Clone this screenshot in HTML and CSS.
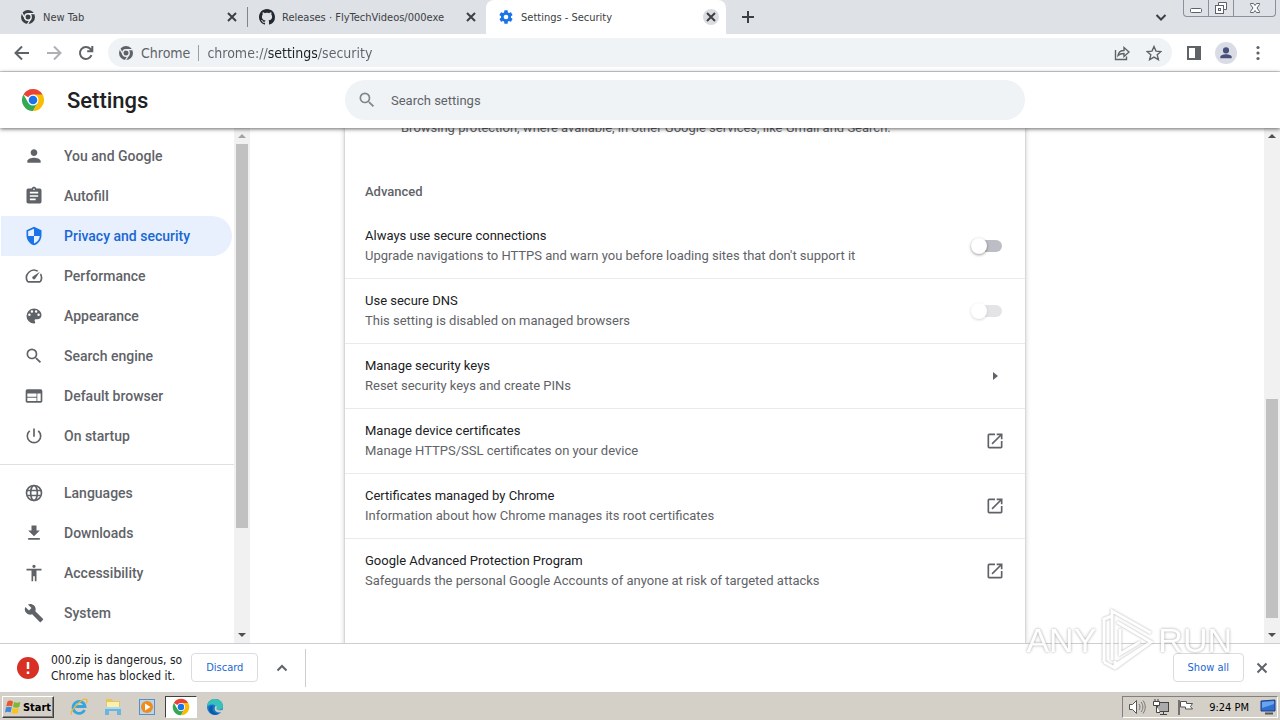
FILE: index.html
```html
<!DOCTYPE html>
<html lang="en">
<head>
  <meta charset="utf-8">
  <meta name="viewport" content="width=device-width, initial-scale=1">
  <title>Settings - Security</title>
  <link rel="stylesheet" href="styles.css">
</head>
<body>
  <svg class="sprite" aria-hidden="true">
    <symbol id="close" viewBox="0 0 16 16"><path d="M4 4l8 8M12 4l-8 8" fill="none" stroke="currentColor" stroke-width="2"/></symbol>
    <symbol id="chrome-mono" viewBox="0 0 16 16">
      <circle cx="8" cy="8" r="7" fill="currentColor"/>
      <circle cx="8" cy="8" r="3.2" fill="currentColor" stroke="#eef1f5" stroke-width="1.4"/>
      <path d="M8 4.7h6.6M5.2 9.6L1.9 3.9M10.8 9.6l-3.3 5.6" stroke="#eef1f5" stroke-width="1.2"/>
    </symbol>
    <symbol id="chrome-color" viewBox="0 0 24 24">
      <path d="M12 12L2.47 6.5A11 11 0 0 1 21.53 6.5z" fill="#ea4335"/>
      <path d="M2.47 6.5A11 11 0 0 0 12 23l4.76-8.25L12 12 7.24 14.75z" fill="#34a853"/>
      <path d="M21.53 6.5A11 11 0 0 1 12 23l4.76-8.25L12 6.5z" fill="#fbbc04"/>
      <circle cx="12" cy="12" r="5.5" fill="#fff"/>
      <circle cx="12" cy="12" r="4.3" fill="#1a73e8"/>
    </symbol>
    <symbol id="search" viewBox="0 0 24 24"><path d="M15.5 14h-.79l-.28-.27A6.47 6.47 0 0 0 16 9.5 6.5 6.5 0 1 0 9.5 16c1.61 0 3.09-.59 4.23-1.57l.27.28v.79l5 4.99L20.49 19l-4.99-5zm-6 0C7.01 14 5 11.99 5 9.5S7.01 5 9.5 5 14 7.01 14 9.5 11.99 14 9.5 14z"/></symbol>
    <symbol id="launch" viewBox="0 0 24 24"><path d="M19 19H5V5h7V3H5a2 2 0 0 0-2 2v14a2 2 0 0 0 2 2h14c1.1 0 2-.9 2-2v-7h-2v7zM14 3v2h3.59l-9.83 9.83 1.41 1.41L19 6.41V10h2V3h-7z"/></symbol>
  </svg>

  <div class="tab-strip">
    <div class="tab">
      <svg class="favicon"><use href="#chrome-mono"/></svg>
      <button class="tab-title">New Tab</button>
      <button class="tab-close" aria-label="Close New Tab"><svg><use href="#close"/></svg></button>
    </div>
    <div class="tab divided">
      <svg class="favicon" viewBox="0 0 16 16"><path fill="#24292f" d="M8 0C3.58 0 0 3.58 0 8c0 3.54 2.29 6.53 5.47 7.59.4.07.55-.17.55-.38 0-.19-.01-.82-.01-1.49-2.01.37-2.53-.49-2.69-.94-.09-.23-.48-.94-.82-1.13-.28-.15-.68-.52-.01-.53.63-.01 1.08.58 1.23.82.72 1.21 1.87.87 2.33.66.07-.52.28-.87.51-1.07-1.78-.2-3.64-.89-3.64-3.95 0-.87.31-1.59.82-2.15-.08-.2-.36-1.02.08-2.12 0 0 .67-.21 2.2.82.64-.18 1.32-.27 2-.27s1.36.09 2 .27c1.53-1.04 2.2-.82 2.2-.82.44 1.1.16 1.92.08 2.12.51.56.82 1.27.82 2.15 0 3.07-1.87 3.75-3.65 3.95.29.25.54.73.54 1.48 0 1.07-.01 1.93-.01 2.2 0 .21.15.46.55.38A8.01 8.01 0 0 0 16 8c0-4.42-3.58-8-8-8z"/></svg>
      <button class="tab-title">Releases · FlyTechVideos/000exe</button>
      <button class="tab-close" aria-label="Close Releases"><svg><use href="#close"/></svg></button>
    </div>
    <div class="tab active">
      <svg class="favicon gear" viewBox="0 0 24 24"><path d="M19.43 12.98c.04-.32.07-.64.07-.98s-.03-.66-.07-.98l2.11-1.65a.5.5 0 0 0 .12-.64l-2-3.46a.5.5 0 0 0-.61-.22l-2.49 1a7.3 7.3 0 0 0-1.69-.98l-.38-2.65A.49.49 0 0 0 14 2h-4a.49.49 0 0 0-.49.42l-.38 2.65c-.61.25-1.17.59-1.69.98l-2.49-1a.5.5 0 0 0-.61.22l-2 3.46a.49.49 0 0 0 .12.64l2.11 1.65a8 8 0 0 0 0 1.96l-2.11 1.65a.5.5 0 0 0-.12.64l2 3.46c.12.22.39.3.61.22l2.49-1c.52.4 1.08.73 1.69.98l.38 2.65c.03.24.24.42.49.42h4c.25 0 .46-.18.49-.42l.38-2.65a7.3 7.3 0 0 0 1.69-.98l2.49 1c.23.09.49 0 .61-.22l2-3.46a.5.5 0 0 0-.12-.64l-2.11-1.65zM12 15.5a3.5 3.5 0 1 1 0-7 3.5 3.5 0 0 1 0 7z"/></svg>
      <button class="tab-title">Settings - Security</button>
      <button class="tab-close" aria-label="Close Settings"><svg><use href="#close"/></svg></button>
    </div>
    <button class="new-tab" aria-label="New tab"><svg viewBox="0 0 16 16"><path d="M8 2v12M2 8h12"/></svg></button>
    <button class="tab-search" aria-label="Search tabs"><svg viewBox="0 0 16 16"><path d="M3.500 6L8 10.500 12.500 6"/></svg></button>
    <div class="window-controls">
      <button aria-label="Minimize"><svg viewBox="0 0 16 16"><rect x="2.500" y="8.500" width="11" height="4" rx="1"/></svg></button>
      <button aria-label="Restore"><svg viewBox="0 0 16 16"><path d="M5.500 5.500v-3h8v7h-3"/><rect x="2.500" y="5.500" width="8" height="8"/><rect x="5.500" y="8.500" width="2" height="2"/></svg></button>
      <button class="wide" aria-label="Close"><svg viewBox="0 0 16 16"><path d="M3.500 3.500h3L8 5.500l1.500-2h3v1L10 8l2.500 3.500v1h-3L8 10.500l-1.500 2h-3v-1L6 8 3.500 4.500z"/></svg></button>
    </div>
  </div>

  <div class="toolbar">
    <button aria-label="Back"><svg viewBox="0 0 16 16"><path d="M15 8H2M8 1.500L1.500 8 8 14.500"/></svg></button>
    <button class="dim" aria-label="Forward"><svg viewBox="0 0 16 16"><path d="M1 8h13M8 1.500L14.500 8 8 14.500"/></svg></button>
    <button aria-label="Reload"><svg viewBox="0 0 16 16"><path d="M13.500 10.200A6 6 0 1 1 12.500 4l1.700 1.800M14.300 1v5.200H9.200"/></svg></button>
    <div class="omnibox">
      <svg class="favicon"><use href="#chrome-mono"/></svg>
      <label for="url">Chrome</label>
      <input id="url" class="url" type="text" value="chrome://settings/security">
      <button aria-label="Share"><svg class="thin" viewBox="0 0 16 16"><path d="M1.500 5v9.500h11v-3M4 10.500c.5-3.500 2.500-5 6-5V2.500l5 4.500-5 4.500V8.500c-2.500 0-4.500.5-6 2z"/></svg></button>
      <button aria-label="Bookmark"><svg class="thin" viewBox="0 0 16 16"><path d="M8 1.500l2 4.600 5 .4-3.800 3.300 1.200 4.900L8 12.100l-4.400 2.600 1.200-4.900L1 6.500l5-.4z"/></svg></button>
    </div>
    <button aria-label="Side panel"><svg viewBox="0 0 16 16"><path d="M2 2h12v12H2z"/><path d="M10 2h4v12h-4z" fill="#5f6368"/></svg></button>
    <button aria-label="Profile"><span class="avatar"><svg viewBox="0 0 16 16"><circle cx="8" cy="5" r="3.500"/><path d="M1.500 14v-1.500c0-2 4-3 6.500-3s6.500 1 6.500 3V14z"/></svg></span></button>
    <button aria-label="Menu"><svg class="dots" viewBox="0 0 16 16"><circle cx="8" cy="2.500" r="1.600"/><circle cx="8" cy="8" r="1.600"/><circle cx="8" cy="13.500" r="1.600"/></svg></button>
  </div>

  <header class="page-header">
    <div class="brand">
      <svg class="logo"><use href="#chrome-color"/></svg>
      <h1>Settings</h1>
    </div>
    <label class="search">
      <svg><use href="#search"/></svg>
      <input type="search" placeholder="Search settings" aria-label="Search settings">
    </label>
  </header>

  <div class="page">
    <nav class="sidebar">
      <div class="menu">
        <a href="#people"><svg viewBox="0 0 24 24"><path d="M12 12c2.210 0 4-1.790 4-4s-1.790-4-4-4-4 1.790-4 4 1.790 4 4 4zm0 2c-2.670 0-8 1.340-8 4v2h16v-2c0-2.660-5.330-4-8-4z"/></svg>You and Google</a>
        <a href="#autofill"><svg viewBox="0 0 24 24"><path d="M19 3h-4.180C14.400 1.840 13.300 1 12 1s-2.400.84-2.820 2H5a2 2 0 0 0-2 2v14c0 1.100.9 2 2 2h14a2 2 0 0 0 2-2V5a2 2 0 0 0-2-2zm-7 0a1 1 0 1 1 0 2 1 1 0 0 1 0-2zm2 14H7v-2h7v2zm3-4H7v-2h10v2zm0-4H7V7h10v2z"/></svg>Autofill</a>
        <a href="#privacy" class="selected"><svg viewBox="0 0 24 24"><path d="M12 1L3 5v6c0 5.550 3.840 10.740 9 12 5.160-1.260 9-6.450 9-12V5l-9-4zm0 10.990h7c-.53 4.120-3.280 7.790-7 8.940V12H5V6.300l7-3.110v8.800z"/></svg>Privacy and security</a>
        <a href="#performance"><svg viewBox="0 0 24 24"><path d="M20.380 8.570l-1.230 1.850a8 8 0 0 1-.22 7.580H5.070A8 8 0 0 1 15.580 6.850l1.850-1.230A10 10 0 0 0 3.350 19a2 2 0 0 0 1.720 1h13.850a2 2 0 0 0 1.740-1 10 10 0 0 0-.27-10.440zm-9.790 6.840a2 2 0 0 0 2.830 0l5.660-8.490-8.490 5.660a2 2 0 0 0 0 2.830z"/></svg>Performance</a>
        <a href="#appearance"><svg viewBox="0 0 24 24"><path d="M12 3a9 9 0 0 0 0 18c.83 0 1.500-.67 1.500-1.500 0-.39-.15-.74-.39-1.010-.23-.26-.38-.61-.38-.99 0-.83.67-1.500 1.500-1.500H16c2.760 0 5-2.240 5-5 0-4.420-4.030-8-9-8zm-5.500 9a1.500 1.500 0 1 1 0-3 1.500 1.500 0 0 1 0 3zm3-4a1.500 1.500 0 1 1 0-3 1.500 1.500 0 0 1 0 3zm5 0a1.500 1.500 0 1 1 0-3 1.500 1.500 0 0 1 0 3zm3 4a1.500 1.500 0 1 1 0-3 1.500 1.500 0 0 1 0 3z"/></svg>Appearance</a>
        <a href="#search-engine"><svg><use href="#search"/></svg>Search engine</a>
        <a href="#default-browser"><svg viewBox="0 0 24 24"><path d="M20 4H4a2 2 0 0 0-1.990 2L2 18c0 1.100.9 2 2 2h16c1.100 0 2-.9 2-2V6a2 2 0 0 0-2-2zm-5 14H4v-4h11v4zm0-5H4V9h11v4zm5 5h-4V9h4v9z"/></svg>Default browser</a>
        <a href="#startup"><svg viewBox="0 0 24 24"><path d="M13 3h-2v10h2V3zm4.830 2.170l-1.420 1.420A6.920 6.920 0 0 1 19 12a7 7 0 1 1-11.420-5.420L6.170 5.170A8.930 8.930 0 0 0 3 12a9 9 0 0 0 18 0c0-2.740-1.230-5.180-3.170-6.830z"/></svg>On startup</a>
        <hr>
        <a href="#languages"><svg viewBox="0 0 24 24"><g fill="none" stroke="#5f6368" stroke-width="2"><circle cx="12" cy="12" r="9"/><ellipse cx="12" cy="12" rx="4" ry="9"/><path d="M4 9h16M4 15h16"/></g></svg>Languages</a>
        <a href="#downloads"><svg viewBox="0 0 24 24"><path d="M19 9h-4V3H9v6H5l7 7 7-7zM5 18v2h14v-2H5z"/></svg>Downloads</a>
        <a href="#accessibility"><svg viewBox="0 0 24 24"><path d="M12 2a2 2 0 1 1 0 4 2 2 0 0 1 0-4zm9 7h-6v13h-2v-6h-2v6H9V9H3V7h18v2z"/></svg>Accessibility</a>
        <a href="#system"><svg viewBox="0 0 24 24"><path d="M22.700 19l-9.100-9.100c.9-2.300.4-5-1.500-6.900-2-2-5-2.400-7.400-1.300L9 6 6 9 1.600 4.700C.4 7.100.9 10.100 2.900 12.100c1.900 1.900 4.600 2.400 6.900 1.500l9.100 9.100c.4.4 1 .4 1.400 0l2.300-2.300c.5-.4.5-1.100.1-1.400z"/></svg>System</a>
      </div>
      <div class="scrollbar at-top"><span class="arrow up"></span><span class="thumb"></span><span class="rest"></span><span class="arrow down"></span></div>
    </nav>

    <main>
      <section class="card">
        <p class="clipped">Browsing protection, where available, in other Google services, like Gmail and Search.</p>
        <h2>Advanced</h2>
        <label class="row">
          <span class="text"><span class="title">Always use secure connections</span><span class="sub">Upgrade navigations to HTTPS and warn you before loading sites that don't support it</span></span>
          <input type="checkbox" class="toggle">
        </label>
        <label class="row">
          <span class="text"><span class="title">Use secure DNS</span><span class="sub">This setting is disabled on managed browsers</span></span>
          <input type="checkbox" class="toggle" disabled>
        </label>
        <a class="row" href="#security-keys">
          <span class="text"><span class="title">Manage security keys</span><span class="sub">Reset security keys and create PINs</span></span>
          <svg viewBox="0 0 20 20"><path d="M8 6l5 4-5 4z"/></svg>
        </a>
        <a class="row" href="#certificates">
          <span class="text"><span class="title">Manage device certificates</span><span class="sub">Manage HTTPS/SSL certificates on your device</span></span>
          <svg><use href="#launch"/></svg>
        </a>
        <a class="row" href="#root-certificates">
          <span class="text"><span class="title">Certificates managed by Chrome</span><span class="sub">Information about how Chrome manages its root certificates</span></span>
          <svg><use href="#launch"/></svg>
        </a>
        <a class="row" href="#advanced-protection">
          <span class="text"><span class="title">Google Advanced Protection Program</span><span class="sub">Safeguards the personal Google Accounts of anyone at risk of targeted attacks</span></span>
          <svg><use href="#launch"/></svg>
        </a>
      </section>
    </main>
    <div class="scrollbar at-bottom"><span class="arrow up dark"></span><span class="rest"></span><span class="thumb"></span><span class="gap"></span><span class="arrow down"></span></div>
  </div>

  <div class="download-bar">
    <svg class="danger" viewBox="0 0 22 22"><circle cx="11" cy="11" r="11" fill="#d93025"/><path d="M11 5v7M11 14.500v2.500" stroke="#fff" stroke-width="2.500"/></svg>
    <p>000.zip is dangerous, so<br>Chrome has blocked it.</p>
    <button class="outlined">Discard</button>
    <button class="icon" aria-label="More"><svg viewBox="0 0 16 16"><path d="M3.500 10.500L8 6l4.500 4.500"/></svg></button>
    <span class="separator"></span>
    <button class="outlined show-all">Show all</button>
    <button class="icon" aria-label="Close downloads bar"><svg viewBox="0 0 16 16"><path d="M3.500 3.500l9 9M12.500 3.500l-9 9"/></svg></button>
  </div>

  <div class="taskbar">
    <button class="start">
      <svg viewBox="0 0 16 16"><path d="M2.500 2.500C4.500 1 6 1.500 8 2.500L7 7.500C5 6.500 3.500 6.500 1.200 7.500z" fill="#e8562a"/><path d="M9 3c2 1 4 1 6.500 0l-1.300 5c-2 1-4 1-6.200 0z" fill="#7db832"/><path d="M1 8.500c2-1 4-1 5.800 0l-1.300 5c-2-1-3.500-1-5.500 0z" fill="#3f8ad8"/><path d="M7.800 9c2 1 4 1 6.200 0l-1.300 5c-2 1-4 1-6.200 0z" fill="#fbc31c"/></svg>
      Start
    </button>
    <div class="quick-launch">
      <button aria-label="Internet Explorer"><svg viewBox="0 0 18 18"><path d="M14.500 12A6 6 0 1 1 15 8.500H5" fill="none" stroke="#36a5df" stroke-width="2.800"/><path d="M1.500 16.500C-.5 13 13-1 16.500 1.500c1 .8.5 2.500-.5 4" fill="none" stroke="#e9b83a" stroke-width="1.300"/></svg></button>
      <button aria-label="Windows Explorer"><svg viewBox="0 0 18 18"><path d="M2 1h6l1 2h7v8H2z" fill="#e9c45c"/><path d="M3 4h12v6H3z" fill="#fbf0b0"/><path d="M1 17V9h16v8h-4v-4H5v4z" fill="#6bb4e0"/><path d="M1 9h16v2H1z" fill="#a9daf3"/></svg></button>
      <button aria-label="Media Player"><svg viewBox="0 0 18 18"><rect x="1.500" y="1.500" width="15" height="15" fill="#b7d7ed" stroke="#5b8fc0"/><circle cx="9" cy="9" r="6" fill="#f28a1c"/><path d="M7 5.500L12.500 9 7 12.500z" fill="#fff"/></svg></button>
      <button class="pressed" aria-label="Chrome"><svg><use href="#chrome-color"/></svg></button>
      <button aria-label="Edge"><svg viewBox="0 0 18 18"><circle cx="9" cy="9" r="8" fill="#1478cf"/><path d="M1 8.500C1.500 3.500 5 1 9 1c5 0 8 3.500 8 7 0 3-2.500 4-4.500 4-2.500 0-3-1-2-2.200C11 7 5 4.500 1 8.500z" fill="#38c1b8"/><path d="M7 8c-2 4 1 8 6 7.500-6 3.500-11-1-9.500-6C4.500 8 6 7.500 7 8z" fill="#0c59a4"/><path d="M9.800 7.500c1.500 1 1 2 .5 3 .5 1.800 3 2.300 6 1.200V14l-3 .5C9 14 7.500 11 9.800 7.500z" fill="#d4d0c8"/></svg></button>
    </div>
    <div class="tray">
      <svg viewBox="0 0 18 18"><path d="M1.500 6.500h3l4-4v13l-4-4h-3z" fill="#fff" stroke="#555"/><path d="M11 6c1.300 2 1.300 4 0 6M13 4c2.500 3 2.500 7 0 10M15 2.500c3 4 3 9 0 13" fill="none" stroke="#777"/></svg>
      <svg viewBox="0 0 18 18"><rect x="5.500" y="4.500" width="11" height="9" fill="#aaa" stroke="#444"/><path d="M8 16.500h7M11.500 14v2" stroke="#444"/><path d="M1.500 3.500h6v4h-6zM3 1v2M6 1v2M4.500 8v6.500H8" fill="#fff" stroke="#444"/></svg>
      <svg viewBox="0 0 18 18"><path d="M4.500 3.500h6v2h6l-2 3 2 2.500H9.500V9h-5z" fill="#fff" stroke="#555"/><path d="M3 2v15" stroke="#555" stroke-width="1.500"/></svg>
      <time>9:24 PM</time>
      <svg class="desktop" viewBox="0 0 18 18"><path d="M2 3l14-1v11H2z" fill="#2f6fd0" stroke="#1d3f86"/><path d="M3 4l12-1v3L3 10z" fill="#69a5ef"/><path d="M6 15.500h8" stroke="#555" stroke-width="2"/></svg>
    </div>
  </div>

  <div class="watermark" aria-hidden="true">
    <span>ANY</span>
    <svg viewBox="0 0 54 64"><path d="M4 54V11l8-3v44M12 52V3l39 22M17 14l34 20L15 57v-4M20 21v25l20-12M4 54l11 6 36-26"/></svg>
    <span>RUN</span>
  </div>
</body>
</html>
```

FILE: styles.css
```css
* {
  box-sizing: border-box;
}

body {
  margin: 0;
  height: 100vh;
  display: flex;
  flex-direction: column;
  overflow: hidden;
  background: #fff;
  color: #202124;
  font-family: "DejaVu Sans Condensed", "DejaVu Sans", sans-serif;
  font-size: 11px;
}

button {
  display: flex;
  align-items: center;
  justify-content: center;
  padding: 0;
  border: none;
  background: none;
  color: inherit;
  font: inherit;
}

a {
  color: inherit;
  text-decoration: none;
}

svg {
  flex: none;
}

.sprite {
  display: none;
}

/* Tabs */
.tab-strip {
  display: flex;
  height: 34px;
  flex: none;
  padding-left: 8px;
  background: #dee1e6;
  color: #3c4043;
}

.tab {
  display: flex;
  align-items: center;
  gap: 7px;
  width: 239px;
  padding: 0 7px 0 12px;
}

.divided {
  background: linear-gradient(#80868b, #80868b) left 7px / 1px 20px no-repeat;
}

.tab.active {
  width: 240px;
  background: #fff;
  border-radius: 8px 8px 0 0;
}

.favicon {
  width: 16px;
  height: 16px;
  color: #3c4043;
}

.gear {
  fill: #1a73e8;
}

.tab-title {
  flex: 1;
  justify-content: flex-start;
  white-space: nowrap;
}

.tab-close {
  width: 16px;
  height: 16px;
  border-radius: 50%;
}

.tab-close svg {
  width: 16px;
  height: 16px;
}

.active .tab-close {
  background: #dadce0;
}

.new-tab,
.tab-search {
  width: 44px;
}

.new-tab svg,
.tab-search svg {
  width: 16px;
  height: 16px;
  fill: none;
  stroke: #3c4043;
  stroke-width: 2;
}

.tab-search {
  margin-left: auto;
}

.window-controls {
  display: flex;
  height: 17px;
  margin-right: 4px;
  border: 1px solid #8b909c;
  border-top: none;
  border-radius: 0 0 4px 4px;
}

.window-controls button {
  width: 25px;
  border-right: 1px solid #8b909c;
}

.window-controls .wide {
  width: 41px;
  border-right: none;
}

.window-controls svg {
  width: 16px;
  height: 16px;
  fill: #fff;
  stroke: #5c616b;
}

/* Toolbar */
.toolbar {
  display: flex;
  align-items: center;
  height: 38px;
  flex: none;
  padding: 0 6px;
  border-bottom: 1px solid #d5d7da;
}

.toolbar button {
  width: 32px;
  height: 28px;
}

.toolbar button svg {
  width: 16px;
  height: 16px;
  fill: none;
  stroke: #5f6368;
  stroke-width: 2;
}

.toolbar .dim {
  opacity: 0.5;
}

.toolbar button .thin {
  stroke-width: 1.4;
}

.toolbar button .dots {
  fill: #5f6368;
  stroke: none;
}

.omnibox {
  display: flex;
  align-items: center;
  flex: 1;
  height: 29px;
  margin: 0 6px;
  padding: 0 2px 0 10px;
  border-radius: 15px;
  background: #eff3f6;
  font-size: 14px;
}

.omnibox .favicon {
  color: #5f6368;
}

.omnibox label {
  margin-left: 7px;
  padding-right: 8px;
  border-right: 1px solid #9aa0a6;
  color: #5f6368;
}

.url {
  flex: 1;
  margin-left: 8px;
  padding: 0;
  border: none;
  background: linear-gradient(90deg, #5f6368 61px, #202124 61px 110px, #5f6368 110px);
  background-clip: text;
  color: transparent;
  font: inherit;
}

.avatar {
  display: flex;
  align-items: center;
  justify-content: center;
  width: 22px;
  height: 22px;
  border-radius: 50%;
  background: #dadce5;
}

.toolbar .avatar svg {
  width: 14px;
  height: 14px;
  fill: #47507a;
  stroke: none;
}

/* Settings header */
.page-header {
  display: grid;
  grid-template-columns: 345px minmax(0, 680px);
  align-items: center;
  height: 56px;
  flex: none;
  position: relative;
  background: #fff;
  box-shadow: 0 1px 4px rgba(0, 0, 0, 0.6);
  font-family: Roboto, sans-serif;
}

.brand {
  display: flex;
  align-items: center;
  gap: 22px;
  padding-left: 21px;
}

.logo {
  width: 24px;
  height: 24px;
}

h1 {
  margin: 0;
  font-size: 22px;
  font-weight: 500;
}

.search {
  display: flex;
  align-items: center;
  gap: 14px;
  height: 40px;
  padding: 0 12px;
  border-radius: 20px;
  background: #eff3f6;
}

.search svg {
  width: 20px;
  height: 20px;
  fill: #80868b;
}

.search input {
  flex: 1;
  padding: 0;
  border: none;
  background: none;
  font: 13px Roboto, sans-serif;
}

.search input::placeholder {
  color: #5f6368;
}

/* Page */
.page {
  display: flex;
  flex: 1;
  min-height: 0;
  font-family: Roboto, sans-serif;
}

.sidebar {
  display: flex;
  width: 250px;
  flex: none;
}

.menu {
  flex: 1;
  overflow: hidden;
  padding-top: 8px;
}

.menu a {
  display: flex;
  align-items: center;
  gap: 20px;
  height: 40px;
  margin: 0 2px 0 1px;
  padding-left: 23px;
  border-radius: 0 20px 20px 0;
  color: #5f6368;
  font-size: 14px;
  font-weight: 500;
}

.menu svg {
  width: 20px;
  height: 20px;
  fill: #5f6368;
}

.menu .selected {
  background: #e8f0fe;
  color: #1967d2;
}

.selected svg {
  fill: #1a73e8;
}

.menu hr {
  margin: 8px 0;
  border: none;
  border-top: 1px solid #e0e0e0;
}

.scrollbar {
  display: flex;
  flex-direction: column;
  align-items: center;
  width: 16px;
  flex: none;
  background: #f1f1f1;
}

.arrow {
  display: flex;
  align-items: center;
  justify-content: center;
  width: 16px;
  height: 16px;
}

.arrow::after {
  content: "";
  border: 4px solid transparent;
}

.up::after {
  border-top: none;
  border-bottom-color: #a3a3a3;
}

.up.dark::after {
  border-bottom-color: #505050;
}

.down::after {
  border-bottom: none;
  border-top-color: #505050;
}

.thumb {
  width: 12px;
  background: #c1c1c1;
}

.at-top .thumb {
  flex: 384;
}

.at-top .rest {
  flex: 99;
}

.at-bottom .rest {
  flex: 255;
}

.at-bottom .thumb {
  flex: 219;
}

.at-bottom .gap {
  flex: 9;
}

main {
  flex: 1;
  overflow: hidden;
  padding-left: 95px;
}

.card {
  max-width: 680px;
  height: 100%;
  box-shadow: 0 1px 2px rgba(60, 64, 67, 0.3), 0 1px 4px 2px rgba(60, 64, 67, 0.15);
  font-size: 13px;
  line-height: 20px;
}

.card::before {
  content: "";
  display: table;
}

.clipped {
  margin: -10px 20px 0 56px;
  color: #5f6368;
}

.card h2 {
  margin: 44px 20px 12px;
  color: #5f6368;
  font-size: 13px;
  font-weight: 500;
}

.row {
  display: flex;
  align-items: center;
  padding: 12px 20px;
}

.row + .row {
  border-top: 1px solid #e8eaed;
}

.text {
  display: flex;
  flex: 1;
  flex-direction: column;
}

.sub {
  color: #5f6368;
}

.row svg {
  width: 20px;
  height: 20px;
  fill: #5f6368;
}

.toggle {
  appearance: none;
  display: flex;
  align-items: center;
  width: 28px;
  height: 12px;
  margin: 0 3px;
  border-radius: 6px;
  background: #bdbdc5;
}

.toggle::before {
  content: "";
  width: 16px;
  height: 16px;
  margin-left: -3px;
  border-radius: 50%;
  background: #fff;
  box-shadow: 0 1px 3px rgba(0, 0, 0, 0.4);
}

.toggle:disabled {
  opacity: 0.4;
}

/* Downloads */
.download-bar {
  display: flex;
  align-items: center;
  height: 50px;
  flex: none;
  padding: 0 8px 1px 17px;
  border-top: 1px solid #ccced1;
  border-bottom: 1px solid #ccced1;
}

.danger {
  width: 22px;
  height: 22px;
}

.download-bar p {
  margin: 0 9px 0 12px;
  font-size: 12px;
  line-height: 16px;
}

.outlined {
  height: 29px;
  padding: 0 14px;
  border: 1px solid #dadce0;
  border-radius: 4px;
  color: #1967d2;
}

.icon {
  width: 20px;
  height: 20px;
}

.outlined + .icon {
  margin-left: 14px;
}

.icon svg {
  width: 16px;
  height: 16px;
  fill: none;
  stroke: #5f6368;
  stroke-width: 2;
}

.separator {
  width: 1px;
  height: 38px;
  margin-left: 13px;
  background: #ccced1;
}

.show-all {
  margin-left: auto;
}

.outlined.show-all + .icon {
  margin-left: 8px;
}

/* Taskbar */
.taskbar {
  display: flex;
  align-items: center;
  height: 27px;
  flex: none;
  padding: 1px 2px 0;
  background: #d4d0c8;
  color: #000;
}

.start {
  gap: 2px;
  width: 52px;
  height: 22px;
  border: 1px solid;
  border-color: #fff #404040 #404040 #fff;
  box-shadow: inset -1px -1px #808080;
  font-weight: 700;
}

.start svg {
  width: 16px;
  height: 16px;
}

.quick-launch {
  display: flex;
  gap: 2px;
  margin-left: 9px;
}

.quick-launch button {
  width: 32px;
  height: 22px;
}

.quick-launch svg {
  width: 18px;
  height: 18px;
}

.quick-launch .pressed {
  border: 1px solid;
  border-color: #404040 #fff #fff #404040;
  background: #fff;
}

.tray {
  display: flex;
  align-items: center;
  gap: 6px;
  height: 22px;
  margin-left: auto;
  padding: 0 0 0 5px;
  border: 1px solid;
  border-color: #808080 #fff #fff #808080;
}

.tray svg {
  width: 18px;
  height: 18px;
}

.tray time {
  margin: 0 4px 0 9px;
}

/* Watermark over the page */
.watermark {
  position: fixed;
  right: 48px;
  bottom: 48px;
  display: flex;
  align-items: center;
  gap: 4px;
  opacity: 0.8;
  color: #fff;
  font: 34px "Liberation Sans", sans-serif;
  text-shadow: 0 0 3px #888;
  pointer-events: none;
}

.watermark svg {
  width: 54px;
  height: 64px;
  fill: none;
  stroke: #fff;
  stroke-width: 3;
  filter: drop-shadow(0 0 1px #999);
}
```
